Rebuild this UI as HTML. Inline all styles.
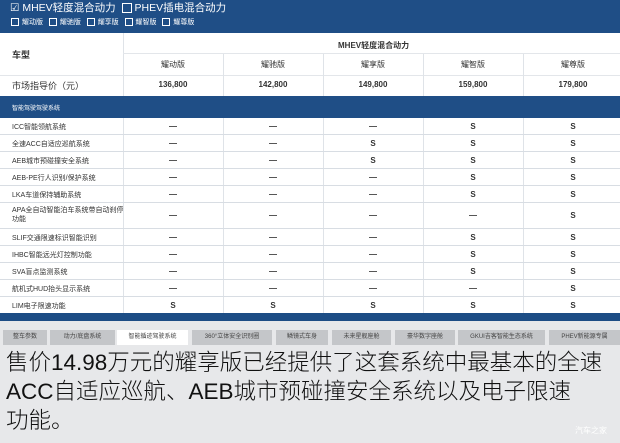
<!DOCTYPE html><html><head><meta charset="utf-8"><style>
*{margin:0;padding:0;box-sizing:border-box}
body{width:620px;height:443px;overflow:hidden;background:#fff;font-family:"Liberation Sans","Noto Sans CJK SC",sans-serif;position:relative;color:#333}
.a{position:absolute}
.hdr{left:0;top:0;width:620px;height:33px;background:#1f4e86;color:#fff}
.cb{display:inline-block;width:10px;height:10px;border:1px solid #fff;vertical-align:middle;margin-right:3px}
.s{font-size:7px}
.row{position:absolute;left:0;width:620px;border-bottom:1px solid #d8dde3;font-size:7px}
.lab{position:absolute;left:12px}
.c{position:absolute;width:100px;text-align:center;font-size:8px;font-weight:bold}
.v{position:absolute;top:0;bottom:0;width:1px;background:#dfe3e8}
.tab{position:absolute;top:330px;height:15px;background:#c4c6c9;font-size:6px;color:#444;text-align:center;line-height:15px}
</style></head><body>
<div class="a hdr">
<div class="a" style="left:10px;top:1px;font-size:10.5px;line-height:15px"><span>☑</span> MHEV轻度混合动力 &nbsp;<span class="cb"></span>PHEV插电混合动力</div>
<div class="a s" style="left:11px;top:17px;line-height:12px"><span class="cb" style="width:8px;height:8px"></span>耀动版 &nbsp; <span class="cb" style="width:8px;height:8px"></span>耀驰版 &nbsp; <span class="cb" style="width:8px;height:8px"></span>耀享版 &nbsp; <span class="cb" style="width:8px;height:8px"></span>耀智版 &nbsp; <span class="cb" style="width:8px;height:8px"></span>耀尊版</div>
</div>
<div class="v" style="left:123px;top:33px;height:63px"></div>
<div class="a" style="left:123px;top:53px;width:497px;height:1px;background:#e3e6ea"></div>
<div class="a" style="left:338px;top:40px;font-size:8px;font-weight:bold">MHEV轻度混合动力</div>
<div class="a" style="left:12px;top:48px;font-size:9px;font-weight:bold">车型</div>
<div class="a" style="left:0;top:75px;width:620px;height:1px;background:#e3e6ea"></div>
<div class="a" style="left:12px;top:79px;font-size:9px">市场指导价（元）</div>
<div id="cols"></div>
<div class="a" style="left:0;top:96px;width:620px;height:22px;background:#1f4e86;color:#fff;font-size:6px;padding:7px 0 0 12px">智能驾驶驾驶系统</div>
<div id="rows"></div>
<div class="a" style="left:0;top:313px;width:620px;height:8px;background:#1d4d85"></div>
<div class="a" style="left:0;top:321px;width:620px;height:122px;background:#e7e8ea"></div>
<div id="tabs"></div>
<div class="a" style="left:6px;top:348px;font-size:22.5px;line-height:29px;color:#111;width:620px;white-space:nowrap;font-weight:300">售价14.98万元的耀享版已经提供了这套系统中最基本的全速<br>ACC自适应巡航、AEB城市预碰撞安全系统以及电子限速<br>功能。</div>
<div class="a" style="left:575px;top:425px;font-size:8px;color:#fff">汽车之家</div>
<script>
var h='';var tr=['耀动版','耀驰版','耀享版','耀智版','耀尊版'],pr=['136,800','142,800','149,800','159,800','179,800'];
for(var i=0;i<5;i++){var x=123+i*100;if(i)h+='<div class="v" style="left:'+x+'px;top:54px;height:42px"></div>';
h+='<div class="c" style="left:'+x+'px;top:59px;font-weight:normal">'+tr[i]+'</div><div class="c" style="left:'+x+'px;top:80px">'+pr[i]+'</div>';}
document.getElementById('cols').innerHTML=h;
var R=[['ICC智能领航系统','---SS'],['全速ACC自适应巡航系统','--SSS'],['AEB城市预碰撞安全系统','--SSS'],['AEB-PE行人识别/保护系统','---SS'],['LKA车道保持辅助系统','---SS'],['APA全自动智能泊车系统带自动刹停<br>功能','----S'],['SLIF交通限速标识智能识别','---SS'],['IHBC智能远光灯控制功能','---SS'],['SVA盲点监测系统','---SS'],['航机式HUD抬头显示系统','----S'],['LIM电子限速功能','SSSSS']];
h='';var y=118;for(var r=0;r<R.length;r++){var hh=r==5?26:17;
h+='<div class="row" style="top:'+y+'px;height:'+hh+'px"><div class="lab" style="top:'+(r==5?3:5)+'px;line-height:9px">'+R[r][0]+'</div>';
for(var i=0;i<5;i++){var x=123+i*100;h+='<div class="v" style="left:'+x+'px"></div><div class="c" style="left:'+x+'px;top:'+(hh/2-5)+'px">'+(R[r][1][i]=='S'?'S':'—')+'</div>';}
h+='</div>';y+=hh;}
document.getElementById('rows').innerHTML=h;
var T=[['整车参数',3,47],['动力/底盘系统',50,115],['智能循迹驾驶系统',117,188],['360°立体安全识别圈',192,272],['鳞镜式车身',276,328],['未来星舰座舱',332,391],['豪华数字座舱',395,455],['GKUI吉客智能生态系统',458,545],['PHEV新能源专属',549,620]];
h='';T.forEach(function(t,k){h+='<div class="tab" style="left:'+t[1]+'px;width:'+(t[2]-t[1])+'px;'+(k==2?'background:#fff':'')+'">'+t[0]+'</div>';});
document.getElementById('tabs').innerHTML=h;
</script>
</body></html>
